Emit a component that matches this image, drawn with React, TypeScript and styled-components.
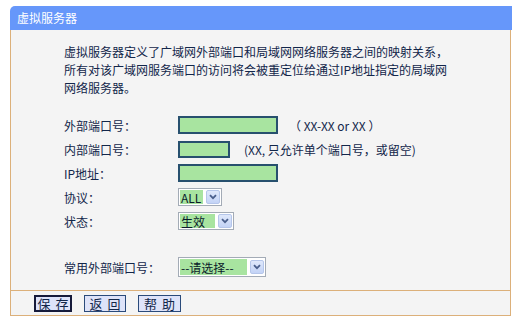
import styled, { createGlobalStyle } from 'styled-components';

const GlobalStyle = createGlobalStyle`
  html, body {
    margin: 0;
    padding: 0;
    background: #ffffff;
  }
  body {
    font-family: "Noto Sans CJK SC", "Liberation Sans", sans-serif;
    font-size: 12px;
  }
`;

const Page = styled.div`
  padding: 6px 0 0 10px;
  width: 502px;
`;

const Header = styled.div`
  height: 24px;
  line-height: 24px;
  background-color: #6697fa;
  color: #ffffff;
  font-size: 12px;
  padding-left: 7px;
  border-top-left-radius: 5px;
`;

const Panel = styled.div`
  width: 501px;
  box-sizing: border-box;
  background-color: #f4f4f4;
  border-left: 1px solid #dcb07a;
  border-right: 1px solid #dcb07a;
  border-bottom: 1px solid #dcb07a;
  color: #12264a;
`;

const Body = styled.div`
  height: 260px;
  box-sizing: border-box;
  padding: 13px 0 0 53px;
`;

const Intro = styled.div`
  margin: 0 0 16px 0;
`;

const IntroLine = styled.div`
  line-height: 18px;
  white-space: nowrap;
`;

const Row = styled.div<{ $gap?: number }>`
  display: flex;
  align-items: center;
  height: 24px;
  margin-top: ${p => p.$gap ?? 0}px;
`;

const Label = styled.span`
  width: 114px;
  flex-shrink: 0;
  white-space: nowrap;
`;

const TextBox = styled.span<{ $w: number; $h?: number }>`
  display: inline-block;
  box-sizing: border-box;
  width: ${p => p.$w}px;
  height: ${p => p.$h ?? 18}px;
  background-color: #a8e4a0;
  border: 2px solid #27506e;
`;

const Hint = styled.span<{ $left: number }>`
  margin-left: ${p => p.$left}px;
  white-space: nowrap;
`;

const SelectBox = styled.span<{ $w: number; $h?: number }>`
  display: inline-flex;
  align-items: center;
  box-sizing: border-box;
  width: ${p => p.$w}px;
  height: ${p => p.$h ?? 18}px;
  border: 1px solid #a3abb6;
  background-color: #ffffff;
  padding: 1px;
  gap: 3px;
`;

const SelectValue = styled.span`
  flex: 1;
  align-self: stretch;
  display: flex;
  align-items: center;
  background-color: #a8e4a0;
  color: #0a1a2a;
  padding-left: 1px;
  white-space: nowrap;
`;

const ArrowButton = styled.span`
  width: 14px;
  height: 14px;
  flex-shrink: 0;
  box-sizing: border-box;
  border: 1px solid #b5c6ea;
  border-radius: 2px;
  background: linear-gradient(#dfe8fb, #c3d3f6);
  display: flex;
  align-items: center;
  justify-content: center;
`;

const Footer = styled.div`
  border-top: 1px solid #dcb07a;
  height: 25px;
  box-sizing: border-box;
  padding: 4px 0 0 23px;
  display: flex;
  align-items: flex-start;
  gap: 12px;
`;

const Button = styled.button<{ $w: number; $active?: boolean }>`
  width: ${p => p.$w}px;
  height: 17px;
  box-sizing: border-box;
  padding: 0;
  background-color: #dee3f9;
  border: ${p => (p.$active ? '2px solid #161a3a' : '1px solid #2a4a7a')};
  color: #12264a;
  font-family: "Noto Sans CJK SC", sans-serif;
  font-size: 13px;
  line-height: 13px;
  white-space: nowrap;
  display: flex;
  align-items: center;
  justify-content: center;
  gap: 5px;
  cursor: pointer;
`;

function Select({ value, w, h }: { value: string; w: number; h?: number }) {
  return (
    <SelectBox $w={w} $h={h}>
      <SelectValue>{value}</SelectValue>
      <ArrowButton>
        <svg width="8" height="6" viewBox="0 0 8 6">
          <path d="M1 1.2 L4 4.2 L7 1.2" fill="none" stroke="#4a5f8c" strokeWidth="1.8" />
        </svg>
      </ArrowButton>
    </SelectBox>
  );
}

function FormButton({ text, w, active }: { text: string; w: number; active?: boolean }) {
  return (
    <Button $w={w} $active={active}>
      {text.split('').map((c, i) => (
        <span key={i}>{c}</span>
      ))}
    </Button>
  );
}

export default function App() {
  return (
    <Page>
      <GlobalStyle />
      <Header>虚拟服务器</Header>
      <Panel>
        <Body>
          <Intro>
            <IntroLine>虚拟服务器定义了广域网外部端口和局域网网络服务器之间的映射关系，</IntroLine>
            <IntroLine>所有对该广域网服务端口的访问将会被重定位给通过IP地址指定的局域网</IntroLine>
            <IntroLine>网络服务器。</IntroLine>
          </Intro>
          <Row>
            <Label>外部端口号：</Label>
            <TextBox $w={100} />
            <Hint $left={11}>（ XX-XX or XX ）</Hint>
          </Row>
          <Row>
            <Label>内部端口号：</Label>
            <TextBox $w={52} $h={17} />
            <Hint $left={14}>(XX, 只允许单个端口号，或留空)</Hint>
          </Row>
          <Row>
            <Label>IP地址：</Label>
            <TextBox $w={100} />
          </Row>
          <Row>
            <Label>协议：</Label>
            <Select value="ALL" w={44} />
          </Row>
          <Row>
            <Label>状态：</Label>
            <Select value="生效" w={56} />
          </Row>
          <Row $gap={22}>
            <Label>常用外部端口号：</Label>
            <Select value="--请选择--" w={88} h={20} />
          </Row>
        </Body>
        <Footer>
          <FormButton text="保存" w={38} active />
          <FormButton text="返回" w={42} />
          <FormButton text="帮助" w={43} />
        </Footer>
      </Panel>
    </Page>
  );
}
